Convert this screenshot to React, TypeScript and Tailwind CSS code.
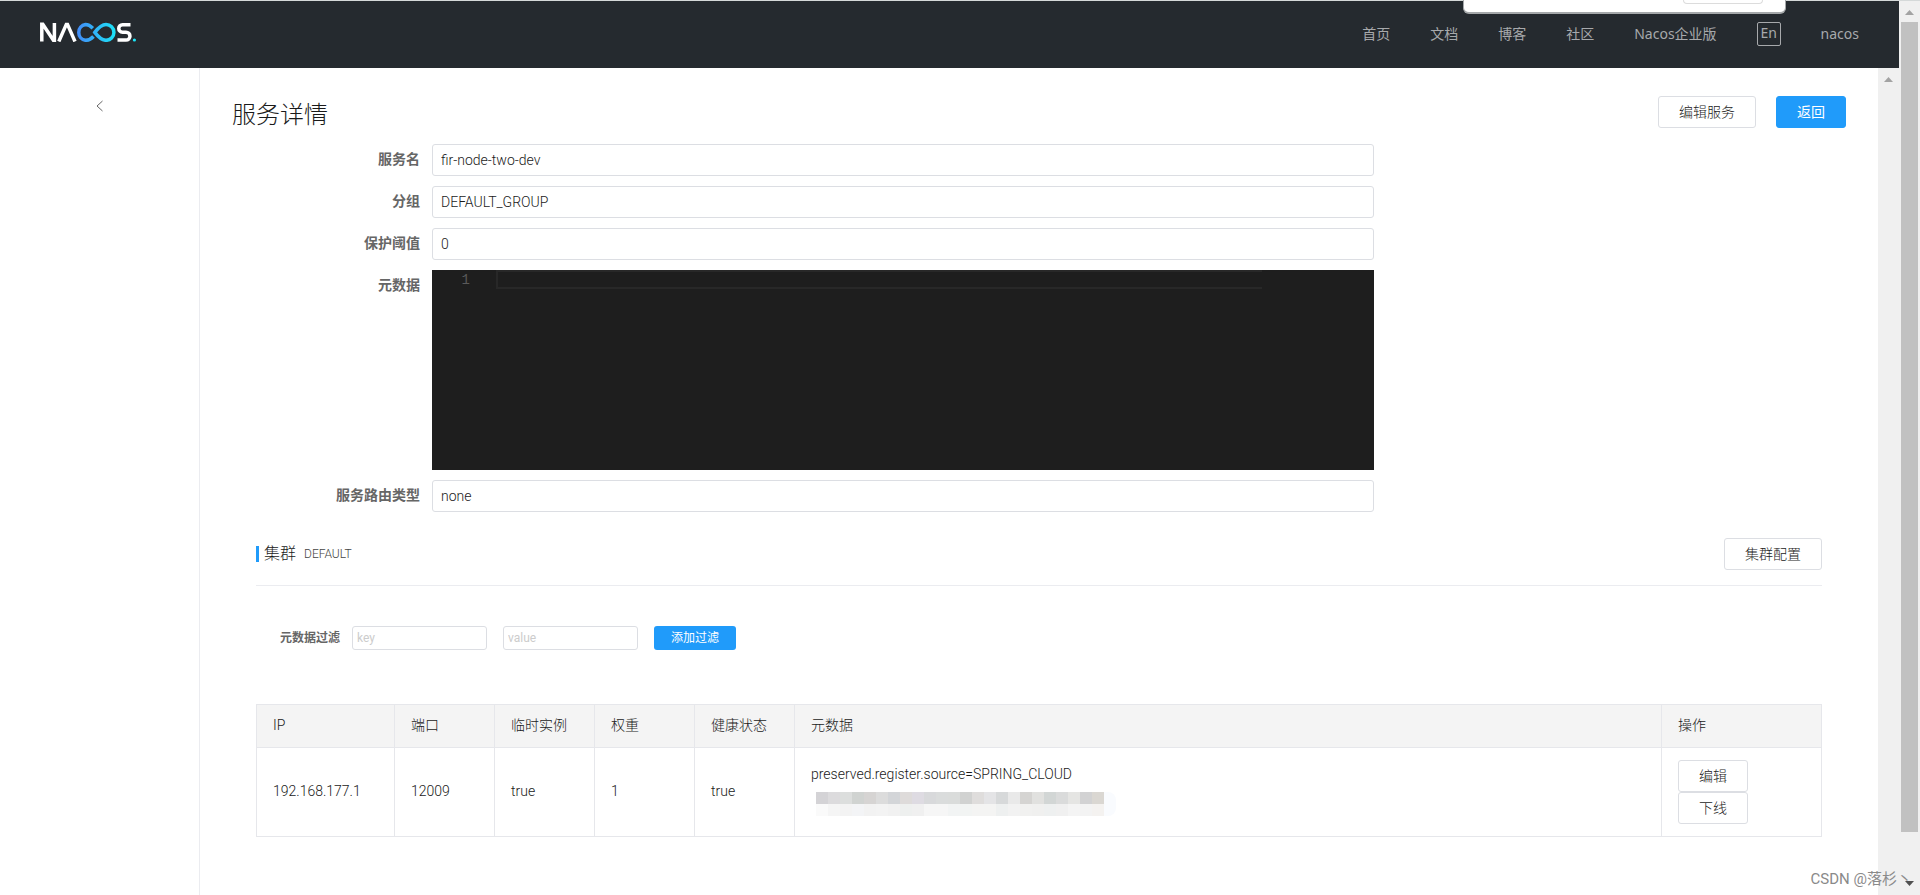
import { ReactNode } from 'react';

const navLinks = ['首页', '文档', '博客', '社区', 'Nacos企业版'];

const mosaicTop = ['#d4d3d6', '#dcdbdd', '#dcdedd', '#d0d3d1', '#d6d4d3', '#dcdcdc', '#d3d5d8', '#dedbda', '#dedbe2', '#d8d9db', '#dadcdc', '#dadcdb', '#d1d2d1', '#dfdddc', '#e4e4e6', '#d7d9da', '#e9e9e9', '#d5d4d2', '#e1e1df', '#d2d6d5', '#dadbdb', '#e5e5e3', '#d2d2d3', '#dad7d2'];
const mosaicBottom = ['#fafafa', '#f5f5f5', '#f3f3f3', '#f3f4f6', '#f2f2f2', '#f3f3f3', '#f1f1f1', '#eef0ef', '#f0f0f0', '#f6f6f6', '#f6f6f6', '#f2f4f4', '#f2f4f3', '#f4f4f3', '#f4f4f3', '#eef0f0', '#f2f2f2', '#f1f1f0', '#f0f0ef', '#eef0f0', '#f0f0f0', '#f4f4f4', '#f3f3f3', '#f4f2f0'];

function Logo() {
  return (
    <svg width="96" height="20" viewBox="0 0 96 20" fill="none" aria-label="Nacos">
      <defs>
        <linearGradient id="loop" x1="36" y1="0" x2="76" y2="0" gradientUnits="userSpaceOnUse">
          <stop stopColor="#4489f7" />
          <stop offset="1" stopColor="#1be4f7" />
        </linearGradient>
      </defs>
      <path d="M1.8 19.500V2.200H2.800L13.400 18.200H14.400V1" stroke="#fff" strokeWidth="3.500" />
      <path d="M18.800 19.500L26.300 2.400H27.500L35 19.500" stroke="#fff" strokeWidth="3.500" />
      <path
        d="M53.500 14.500C51 17.200 48.200 18.300 45.500 18.300A8 8 0 0 1 45.500 2.500C48.200 2.500 50.500 3.800 52.800 6.200M54.800 10.400C58.500 5.500 62 2.500 66 2.500A7.900 7.900 0 0 1 66 18.300C62 18.300 58.500 15.300 54.800 10.400Z"
        stroke="url(#loop)"
        strokeWidth="3.500"
      />
      <path d="M90.500 2.700H82.500A3.700 3.700 0 0 0 82.500 10.200H86A3.900 3.900 0 0 1 86 18.100H77.500" stroke="#fff" strokeWidth="3.500" />
      <circle cx="94.400" cy="18" r="1.600" fill="#1be4f7" />
    </svg>
  );
}

function Arrow({ down, className }: { down?: boolean; className: string }) {
  return (
    <svg width="9" height="5" viewBox="0 0 9 5" className={className}>
      <path d={down ? 'M0 0H9L4.500 5Z' : 'M0 5H9L4.500 0Z'} fill="currentColor" />
    </svg>
  );
}

function Button({ primary, children }: { primary?: boolean; children: ReactNode }) {
  return (
    <button
      className={
        primary
          ? 'h-8 px-5 rounded-[3px] border border-[#209bfa] bg-[#209bfa] text-sm leading-5 font-normal text-white'
          : 'h-8 px-5 rounded-[3px] border border-[#dcdee3] bg-white text-sm leading-5 text-[#1a1a1a]'
      }
    >
      {children}
    </button>
  );
}

function Field({ id, label, value }: { id: string; label: string; value: string }) {
  return (
    <div className="flex">
      <label htmlFor={id} className="w-[200px] pr-3 text-right text-sm leading-[30px] font-bold text-[#666]">
        {label}
      </label>
      <input id={id} readOnly defaultValue={value} className="h-8 w-7/12 px-2 rounded-[3px] border border-[#dcdee3] text-sm text-[#1a1a1a]" />
    </div>
  );
}

function Header() {
  return (
    <header className="relative flex h-[68px] items-start justify-between border-t border-[#d5d9d9] bg-[#252a2f] px-10">
      <a href="#" className="mt-[21px]">
        <Logo />
      </a>
      <nav className="mt-5 flex gap-10 font-['Noto_Sans','Noto_Sans_CJK_SC',sans-serif] text-sm leading-[26px] font-normal text-[#a7a9ac]">
        {navLinks.map(text => (
          <a key={text} href="#">{text}</a>
        ))}
        <button className="mt-px flex h-6 w-6 justify-center rounded-[2px] border border-[#a7a9ac] text-sm leading-5">En</button>
        <a href="#">nacos</a>
      </nav>
      {/* browser popup hanging over the header */}
      <div className="absolute -top-px right-[113px] flex h-[14px] w-[323px] justify-end overflow-hidden rounded-b-md border border-t-0 border-b-2 border-[#a5a8aa] bg-white pr-[22px]">
        <div className="h-1 w-20 rounded-b-md border border-t-0 border-[#dcdcdc]" />
      </div>
    </header>
  );
}

function InstanceTable() {
  return (
    <table className="w-full table-fixed border-collapse border border-[#e6e7eb] text-left text-sm text-[#1a1a1a]">
      <colgroup>
        <col className="w-[138px]" />
        <col className="w-[100px]" />
        <col className="w-[100px]" />
        <col className="w-[100px]" />
        <col className="w-[100px]" />
        <col />
        <col className="w-[160px]" />
      </colgroup>
      <thead>
        <tr className="h-[43px] bg-[#f4f4f4]">
          {['IP', '端口', '临时实例', '权重', '健康状态', '元数据', '操作'].map(head => (
            <th key={head} className="border border-[#e6e7eb] px-4 pb-0.5 font-light">{head}</th>
          ))}
        </tr>
      </thead>
      <tbody>
        <tr className="h-[89px]">
          {['192.168.177.1', '12009', 'true', '1', 'true'].map((cell, i) => (
            <td key={i} className="border border-[#e6e7eb] px-4 pb-0.5">{cell}</td>
          ))}
          <td className="border border-[#e6e7eb] px-4 pb-1">
            <p className="leading-5">preserved.register.source=SPRING_CLOUD</p>
            <div className="mt-2 ml-[5px]">
              <div className="flex">
                {mosaicTop.map((color, i) => (
                  <span key={i} className="h-3 w-3" style={{ background: color }} />
                ))}
                <span className="h-3 w-3 rounded-tr-lg bg-[#f9fbfe]" />
              </div>
              <div className="flex">
                {mosaicBottom.map((color, i) => (
                  <span key={i} className="h-3 w-3" style={{ background: color }} />
                ))}
                <span className="h-3 w-3 rounded-br-lg bg-[#f9fbfe]" />
              </div>
            </div>
          </td>
          <td className="border border-[#e6e7eb] px-4">
            <div className="flex flex-col items-start">
              <Button>编辑</Button>
              <Button>下线</Button>
            </div>
          </td>
        </tr>
      </tbody>
    </table>
  );
}

export default function App() {
  return (
    <div className="relative flex h-screen overflow-hidden bg-white font-[Roboto,'Noto_Sans_CJK_SC',sans-serif] font-light text-[#1a1a1a]">
      <div className="flex min-w-0 flex-1 flex-col">
        <Header />
        <div className="flex min-h-0 flex-1">
          <aside className="flex w-[200px] shrink-0 items-start justify-center border-r border-[#ebecf0] pt-8">
            <button aria-label="收起">
              <svg width="8" height="12" viewBox="0 0 8 12" fill="none" stroke="#666">
                <path d="M6.500 1L1 6L6.500 11" />
              </svg>
            </button>
          </aside>

          <main className="min-w-0 flex-1 px-8 pt-7">
            <div className="flex h-12 justify-between">
              <h1 className="text-2xl leading-[38px]">服务详情</h1>
              <div className="flex items-start gap-5">
                <Button>编辑服务</Button>
                <Button primary>返回</Button>
              </div>
            </div>

            <form className="flex flex-col gap-[10px]">
              <Field id="name" label="服务名" value="fir-node-two-dev" />
              <Field id="group" label="分组" value="DEFAULT_GROUP" />
              <Field id="threshold" label="保护阈值" value="0" />
              <div className="flex">
                <label htmlFor="metadata" className="w-[200px] pr-3 text-right text-sm leading-[30px] font-bold text-[#666]">
                  元数据
                </label>
                <div className="flex h-[200px] w-7/12 bg-[#1e1e1e]">
                  <span className="w-16 pr-[26px] text-right font-['Liberation_Mono',monospace] text-sm leading-5 text-[#5a5a5a]">1</span>
                  <textarea id="metadata" readOnly className="mr-28 h-[19px] min-w-0 flex-1 resize-none overflow-hidden border-2 border-r-0 border-[#282828]" />
                </div>
              </div>
              <Field id="selector" label="服务路由类型" value="none" />
            </form>

            <section className="mt-[26px] px-6">
              <div className="flex h-12 justify-between border-b border-[#ebecf0]">
                <h2 className="flex h-8 items-center text-base leading-6">
                  <span className="mr-[5px] h-4 w-[3px] bg-[#209bfa]" />
                  集群
                  <span className="ml-2 text-xs text-[#444]">DEFAULT</span>
                </h2>
                <Button>集群配置</Button>
              </div>

              <div className="mt-10 mb-[54px] flex items-center pl-6 text-xs">
                <label htmlFor="key" className="pr-3 font-bold text-[#666]">元数据过滤</label>
                <input id="key" placeholder="key" className="mr-4 h-6 w-[135px] rounded-[3px] border border-[#dcdee3] px-1 font-normal placeholder:text-[#ccc]" />
                <input aria-label="value" placeholder="value" className="mr-4 h-6 w-[135px] rounded-[3px] border border-[#dcdee3] px-1 font-normal placeholder:text-[#ccc]" />
                <button className="h-6 rounded-[3px] bg-[#209bfa] px-[17px] font-normal text-white">添加过滤</button>
              </div>

              <InstanceTable />
            </section>
          </main>

          <div className="flex w-[21px] shrink-0 justify-center bg-[#f0f0f0] pt-[9px]">
            <Arrow className="text-[#a3a3a3]" />
          </div>
        </div>
      </div>

      <div className="flex w-[21px] shrink-0 flex-col items-center border-t border-[#d5d9d9] bg-[#f0f0f0]">
        <Arrow className="mt-[9px] mb-[7px] text-[#a3a3a3]" />
        <div className="w-[17px] flex-1 bg-[#c1c1c1]" />
        <Arrow down className="mt-[49px] mb-[9px] text-[#505050]" />
      </div>

      <p className="absolute right-2 bottom-1 text-[15px] leading-6 font-normal text-[#8a8a8a]">CSDN @落杉丶</p>
    </div>
  );
}
